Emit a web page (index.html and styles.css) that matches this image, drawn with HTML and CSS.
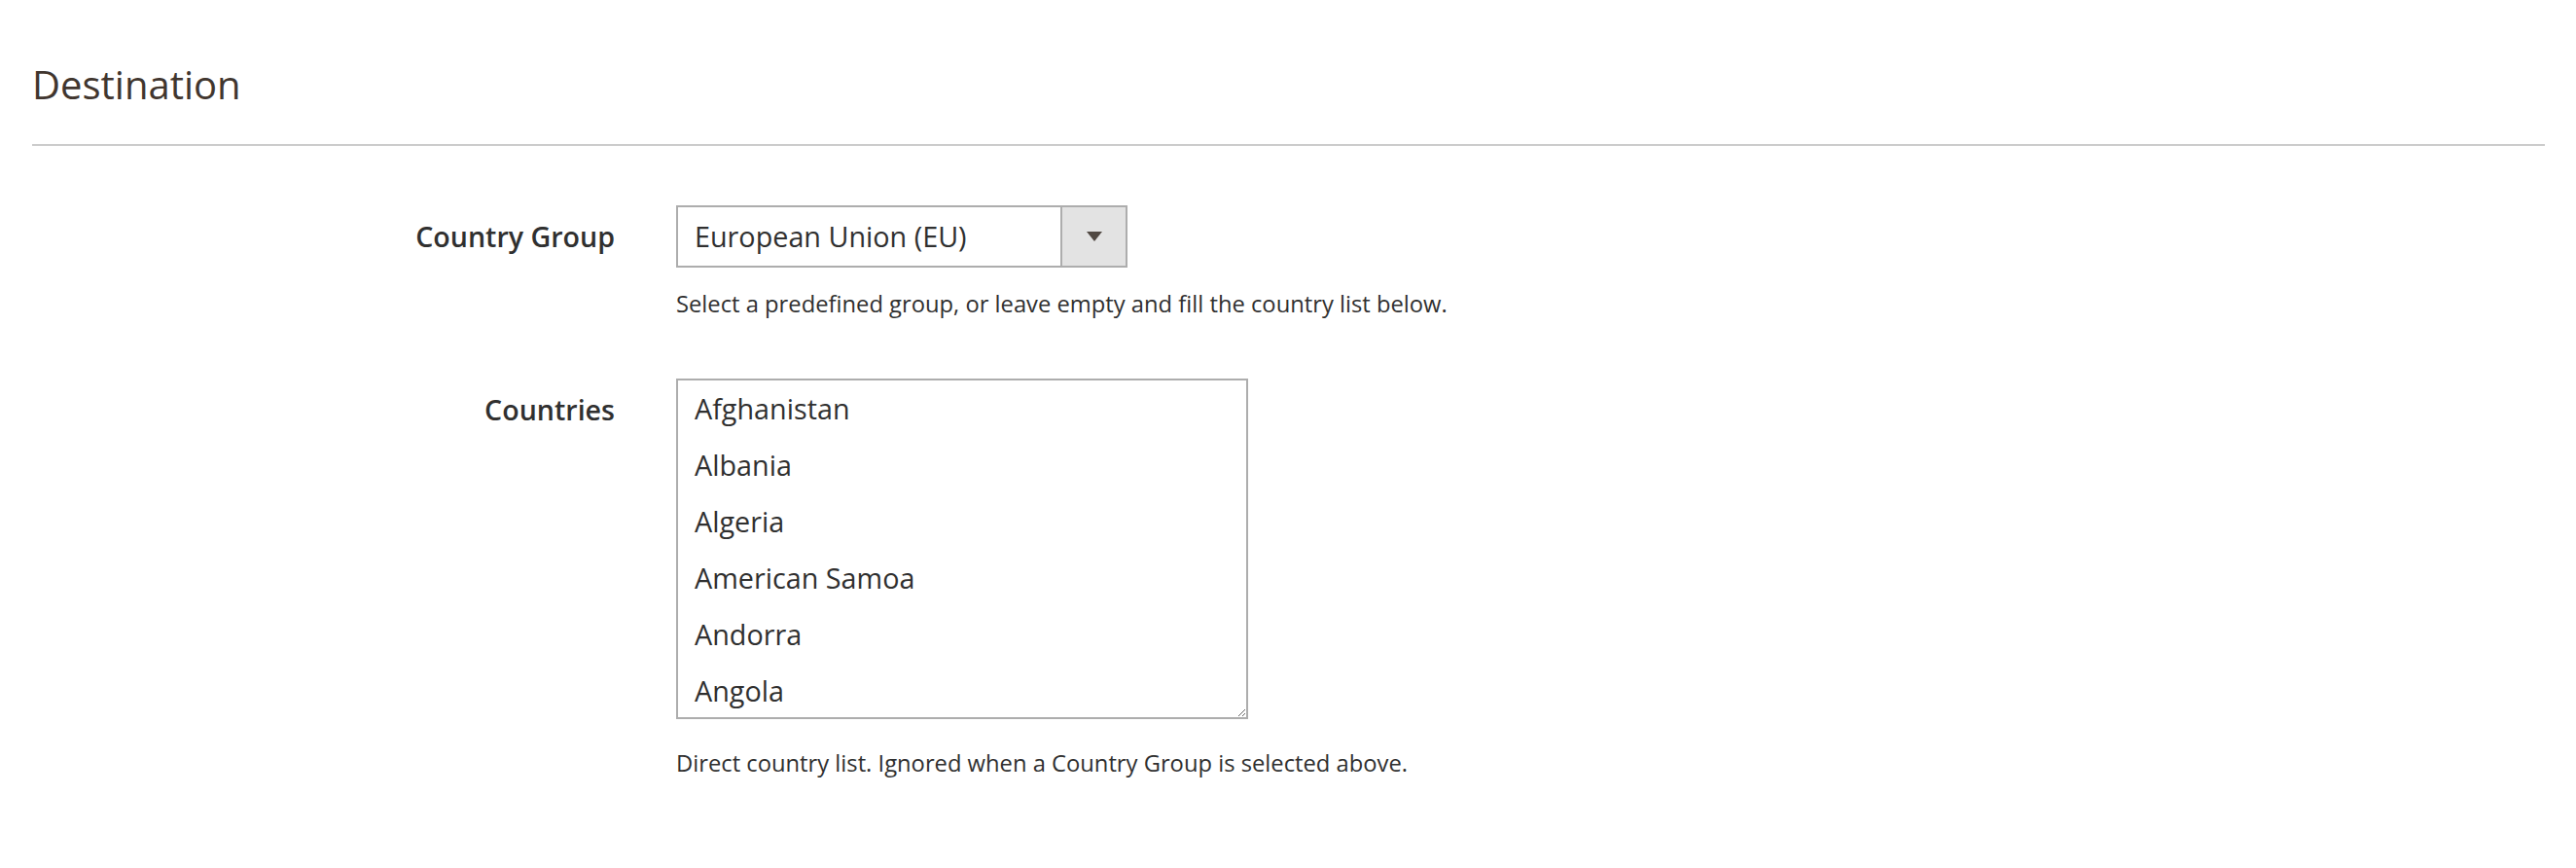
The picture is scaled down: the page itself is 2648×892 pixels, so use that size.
FILE: index.html
```html
<!DOCTYPE html>
<html lang="en">
<head>
<meta charset="utf-8">
<title>Destination</title>
<link rel="stylesheet" href="styles.css">
</head>
<body>
<div class="page">
  <fieldset class="fieldset">
    <div class="legend"><span>Destination</span></div>

    <div class="field">
      <label class="field-label">Country Group</label>
      <div class="field-control">
        <div class="select">
          <span class="select-value">European Union (EU)</span>
          <span class="select-button"><span class="arrow"></span></span>
        </div>
        <div class="note">Select a predefined group, or leave empty and fill the country list below.</div>
      </div>
    </div>

    <div class="field field-countries">
      <label class="field-label">Countries</label>
      <div class="field-control">
        <div class="multiselect">
          <div class="option">Afghanistan</div>
          <div class="option">Albania</div>
          <div class="option">Algeria</div>
          <div class="option">American Samoa</div>
          <div class="option">Andorra</div>
          <div class="option">Angola</div>
        </div>
        <div class="note note-countries">Direct country list. Ignored when a Country Group is selected above.</div>
      </div>
    </div>
  </fieldset>
</div>
</body>
</html>
```

FILE: styles.css
```css
html, body {
  margin: 0;
  padding: 0;
  background: #ffffff;
}

body {
  font-family: "Open Sans", "Noto Sans", "DejaVu Sans", sans-serif;
  color: #303030;
}

.page {
  padding: 0 32px 0 33px;
}

.fieldset {
  border: 0;
  margin: 0;
  padding: 0;
  min-width: 0;
}

.legend {
  margin-top: 63px;
  padding-bottom: 37px;
  border-bottom: 2px solid #cccccc;
  font-size: 40px;
  line-height: 48px;
  font-weight: 400;
  color: #41362f;
}

.field {
  display: grid;
  grid-template-columns: 599px 1fr;
  column-gap: 63px;
  margin-top: 61px;
}

.field-countries {
  margin-top: 60px;
}

.field-label {
  padding-top: 14.5px;
  text-align: right;
  font-size: 28.6px;
  line-height: 1.2;
  font-weight: 600;
  color: #303030;
}

.field-control {
  min-width: 0;
}

.select {
  display: flex;
  width: 464px;
  height: 64px;
  box-sizing: border-box;
  border: 2px solid #adadad;
  background: #ffffff;
}

.select-value {
  flex: 1;
  padding-left: 17px;
  font-size: 28.75px;
  line-height: 60px;
  color: #303030;
  white-space: nowrap;
}

.select-button {
  width: 65px;
  border-left: 2px solid #adadad;
  background: #e3e3e3;
  display: flex;
  align-items: center;
  justify-content: center;
}

.arrow {
  width: 0;
  height: 0;
  border-left: 8px solid transparent;
  border-right: 8px solid transparent;
  border-top: 10px solid #514943;
}

.note {
  margin-top: 21px;
  font-size: 23.75px;
  line-height: 1.4;
  color: #303030;
}

.note-countries {
  margin-top: 29px;
}

.multiselect {
  width: 588px;
  height: 350px;
  box-sizing: border-box;
  border: 2px solid #adadad;
  background: #ffffff;
  overflow: hidden;
  resize: both;
}

.option {
  padding-left: 17px;
  font-size: 28.75px;
  line-height: 58px;
  height: 58px;
  color: #303030;
  white-space: nowrap;
}
```
